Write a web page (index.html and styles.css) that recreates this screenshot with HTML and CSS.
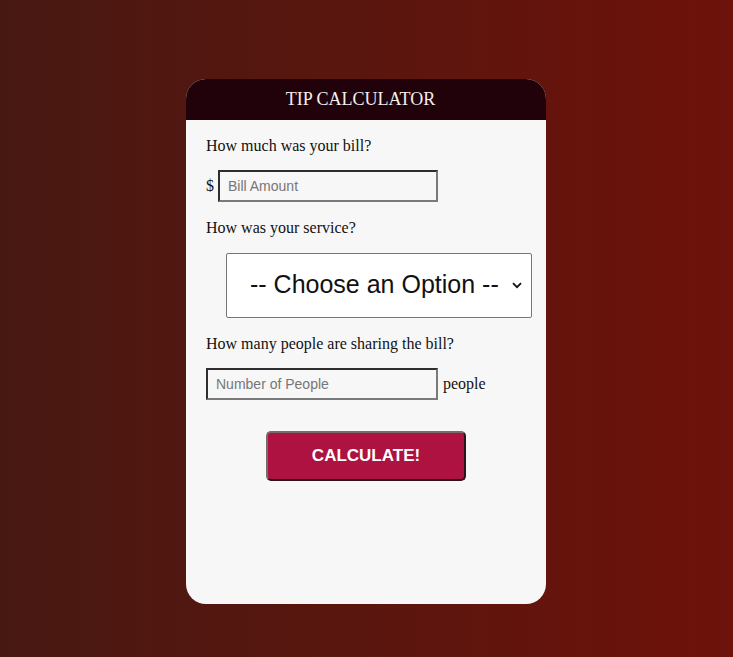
FILE: index.html
```html
<!DOCTYPE html>
<html>
<head>
<meta charset="utf-8">
<title>Tip Calculator</title>
<link rel="stylesheet" href="styles.css">
</head>
<body>
<div class="card">
  <h1 class="title">TIP CALCULATOR</h1>
  <div class="content">
    <p class="label">How much was your bill?</p>
    <div class="row">
      <span class="unit-before">$</span>
      <input class="field bill" type="text" placeholder="Bill Amount">
    </div>
    <p class="label">How was your service?</p>
    <div class="select-wrap">
      <select class="service">
        <option>-- Choose an Option --</option>
        <option>30% - Outstanding</option>
        <option>20% - Good</option>
        <option>15% - It was OK</option>
        <option>10% - Bad</option>
        <option>5% - Terrible</option>
      </select>
      <svg class="chevron" width="10" height="7" viewBox="0 0 10 7"><path d="M1 1.2 L5 5.2 L9 1.2" fill="none" stroke="#111" stroke-width="1.8"/></svg>
    </div>
    <p class="label">How many people are sharing the bill?</p>
    <div class="row">
      <input class="field people" type="text" placeholder="Number of People">
      <span class="unit-after">people</span>
    </div>
    <button class="calc" type="button">Calculate!</button>
  </div>
</div>
</body>
</html>
```
FILE: styles.css
```css
html, body {
  margin: 0;
  padding: 0;
}
body {
  height: 657px;
  padding-right: 1px;
  background: linear-gradient(to right, #471812 0%, #5a160e 50%, #6e120a 100%);
  font-family: "Liberation Serif", "Times New Roman", serif;
  color: #111;
  overflow: hidden;
}
.card {
  width: 360px;
  height: 525px;
  margin: 79px auto 0;
  background: #f7f7f7;
  border-radius: 20px;
  overflow: hidden;
}
.title {
  margin: 0;
  height: 41px;
  line-height: 41px;
  padding-right: 11px;
  background: #21020a;
  color: #f4eeee;
  font-size: 18px;
  font-weight: normal;
  text-align: center;
}
.content {
  padding: 17px 20px 0;
  display: flex;
  flex-direction: column;
}
.label {
  margin: 0 0 15px;
  font-size: 16px;
  line-height: 18px;
}
.row {
  display: flex;
  align-items: center;
  height: 32px;
  margin-bottom: 17px;
  font-size: 16px;
}
.unit-before {
  margin-right: 4px;
}
.unit-after {
  margin-left: 5px;
}
.field {
  box-sizing: border-box;
  height: 32px;
  border: 2px solid;
  border-color: #2e2e2e #7a7a7a #7a7a7a #2e2e2e;
  background: transparent;
  padding: 0 8px;
  font-family: "Liberation Sans", Arial, sans-serif;
  font-size: 14px;
  color: #222;
  outline: none;
}
.field::placeholder {
  color: #767676;
}
.bill {
  width: 220px;
}
.people {
  width: 232px;
}
.select-wrap {
  position: relative;
  margin: 1px 0 17px 20px;
  width: 306px;
  height: 65px;
}
.service {
  appearance: none;
  -webkit-appearance: none;
  box-sizing: border-box;
  width: 306px;
  height: 65px;
  border: 1px solid #767676;
  border-radius: 2px;
  background: #fff;
  padding: 0 0 4px 23px;
  font-family: "Liberation Sans", Arial, sans-serif;
  font-size: 25px;
  color: #111;
  outline: none;
}
.chevron {
  position: absolute;
  right: 10px;
  top: 29px;
  pointer-events: none;
}
.calc {
  align-self: center;
  margin: 14px 0 0;
  box-sizing: border-box;
  width: 200px;
  height: 50px;
  border: 2px solid;
  border-color: #7a6a6c #2a1518 #2a1518 #7a6a6c;
  border-radius: 5px;
  background: #ae1240;
  color: #fff;
  font-family: "Liberation Sans", Arial, sans-serif;
  font-size: 17px;
  font-weight: bold;
  text-transform: uppercase;
}
```
